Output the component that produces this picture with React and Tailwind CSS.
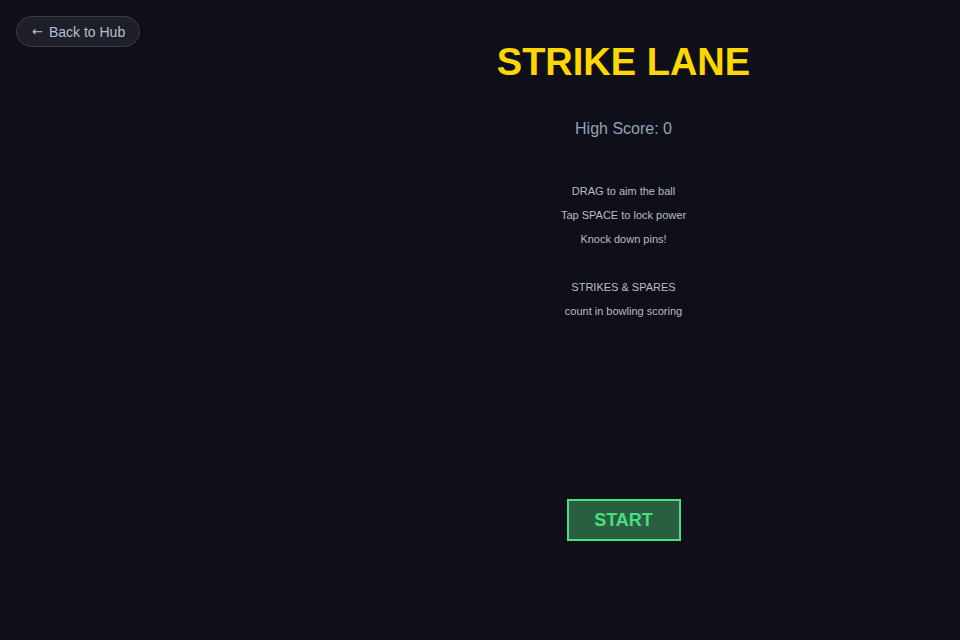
import React from 'react';

const lines = ['DRAG to aim the ball', 'Tap SPACE to lock power', 'Knock down pins!', '', 'STRIKES & SPARES', 'count in bowling scoring'];

const App = () => {
  return (
    <div className="relative w-full h-[640px] bg-[#0e0f18] overflow-hidden font-['Liberation_Sans',Arial,sans-serif]">
      <button className="absolute left-4 top-4 h-[31px] pl-[15px] pr-[14px] rounded-full bg-[#1e1f29] border border-[#3a3c48] text-[#b4c0d4] text-[14px] leading-none flex items-center gap-[6px]">
        <span className="font-['DejaVu_Sans',sans-serif] text-[13px]">←</span>
        <span>Back to Hub</span>
      </button>

      <div className="flex justify-center pl-[287px]">
        <div className="w-[480px] flex flex-col items-center">
          <h1 className="mt-[40px] h-[44px] flex items-center text-[38px] font-bold leading-none text-[#ffd700]">STRIKE LANE</h1>
          <p className="mt-[35px] h-[20px] flex items-center text-[16px] leading-none text-[#94a3b8]">High Score: 0</p>
          <div className="mt-[40px] flex flex-col items-center">
            {lines.map((l, i) => (
              <div key={i} className="h-[24px] flex items-center text-[11px] leading-none text-[#bdbdbd]">
                {l}
              </div>
            ))}
          </div>
          <button className="mt-[176px] w-[114px] h-[42px] border-2 border-[#4ade80] bg-[#2a5e40] text-[#4ade80] text-[18px] font-bold leading-none flex items-center justify-center">
            START
          </button>
        </div>
      </div>
    </div>
  );
};

export default App;
